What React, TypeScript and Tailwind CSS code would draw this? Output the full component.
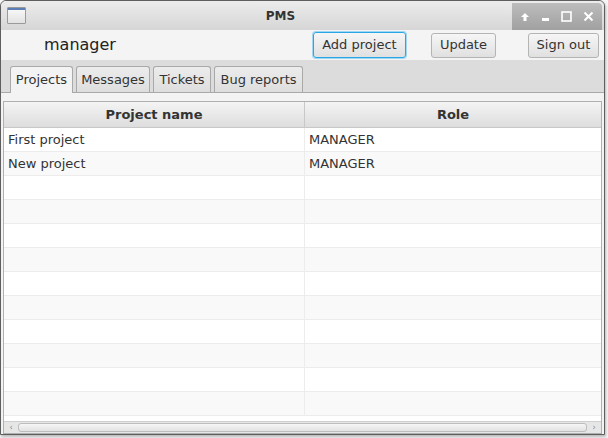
import React from 'react';

const font = { fontFamily: '"DejaVu Sans", "Liberation Sans", sans-serif' };

const rows = [
  { name: 'First project', role: 'MANAGER' },
  { name: 'New project', role: 'MANAGER' },
];

function TitleBar() {
  return (
    <div className="h-[29px] flex items-stretch bg-gradient-to-b from-[#ececec] to-[#d6d6d6] rounded-t-[5px]">
      <div className="w-[30px] flex items-center pl-[6px]">
        {/* window icon */}
        <div className="w-[19px] h-[17px] border border-[#9a9a9a] bg-gradient-to-b from-[#fafafa] to-[#e2e2e2] rounded-[1px] overflow-hidden">
          <div className="h-[2px] bg-[#5b7fb5]" />
        </div>
      </div>
      <div className="flex-1 flex items-center justify-center pl-[18px] text-[12px] font-bold text-[#333]">PMS</div>
      <div className="w-[90px] mt-[2px] mr-[2px] bg-gradient-to-b from-[#bdbdbd] to-[#a0a0a0] rounded-tr-[4px] flex items-center justify-around px-[3px]">
        <svg width="10" height="10" viewBox="0 0 10 10">
          <path d="M5 1 L9 5 H6.5 V9 H3.5 V5 H1 Z" fill="#fff" />
        </svg>
        <svg width="10" height="10" viewBox="0 0 10 10">
          <rect x="1" y="6" width="7" height="3" fill="#fff" />
        </svg>
        <svg width="11" height="11" viewBox="0 0 11 11">
          <rect x="1" y="1" width="9" height="9" fill="none" stroke="#fff" strokeWidth="1.6" />
        </svg>
        <svg width="11" height="11" viewBox="0 0 11 11">
          <path d="M1.5 1.5 L9.5 9.5 M9.5 1.5 L1.5 9.5" stroke="#fff" strokeWidth="2" />
        </svg>
      </div>
    </div>
  );
}

function Btn({ label, focused, className }: { label: string; focused?: boolean; className: string }) {
  return (
    <div
      className={
        'h-[25px] flex items-center justify-center text-[13px] text-[#333] rounded-[3px] bg-gradient-to-b from-[#f6f6f6] to-[#e0e0e0] ' +
        (focused ? 'border border-[#2aa6e6] shadow-[0_0_0_1px_#9fd6f2] ' : 'border border-[#b4b4b4] ') +
        className
      }
    >
      {label}
    </div>
  );
}

function Tab({ label, active, w }: { label: string; active?: boolean; w: string }) {
  return (
    <div
      className={
        'h-[26px] flex items-center justify-center text-[13px] text-[#333] border border-b-0 border-[#a9a9a9] rounded-t-[3px] ' +
        (active ? 'bg-[#f3f3f3] h-[27px] -mb-px ' : 'bg-gradient-to-b from-[#ececec] to-[#dedede] ') +
        w
      }
    >
      {label}
    </div>
  );
}

export default function App() {
  const empty = Array.from({ length: 10 });
  return (
    <div className="w-[608px] h-[438px] bg-[#f6f6f6] overflow-hidden" style={font}>
      <div className="w-[605px] h-[435px] border border-[#5e5e5e] rounded-t-[6px] bg-[#f3f3f3] flex flex-col overflow-hidden shadow-[1px_2px_3px_rgba(0,0,0,0.25)]">
        <TitleBar />

        {/* toolbar */}
        <div className="h-[30px] flex items-center bg-[#f4f4f4]">
          <span className="ml-[43px] text-[16px] text-[#222]">manager</span>
          <Btn label="Add project" focused className="ml-[197px] w-[93px] h-[26px]" />
          <Btn label="Update" className="ml-[25px] w-[65px]" />
          <Btn label="Sign out" className="ml-[32px] w-[71px]" />
        </div>

        {/* tabs */}
        <div className="h-[33px] bg-[#dcdcdc] flex items-end gap-[3px] pl-[9px] border-b border-[#a9a9a9]">
          <Tab label="Projects" active w="w-[63px]" />
          <Tab label="Messages" w="w-[74px]" />
          <Tab label="Tickets" w="w-[58px]" />
          <Tab label="Bug reports" w="w-[89px]" />
        </div>

        {/* table */}
        <div className="flex-1 bg-[#f3f3f3] pt-[8px] px-[2px] flex flex-col min-h-0">
          <div className="flex-1 border border-[#b0b0b0] bg-white flex flex-col min-h-0">
            <div className="h-[26px] flex bg-gradient-to-b from-[#f4f4f4] to-[#dddddd] border-b border-[#c8c8c8] text-[13px] font-bold text-[#333]">
              <div className="w-[301px] flex items-center justify-center border-r border-[#c8c8c8]">Project name</div>
              <div className="flex-1 flex items-center justify-center">Role</div>
            </div>
            <div className="flex-1 overflow-hidden">
              {rows.map((r, i) => (
                <div key={i} className={'h-[24px] flex text-[13px] text-[#333] border-b border-[#ececec] ' + (i % 2 ? 'bg-[#f9f9f9]' : 'bg-white')}>
                  <div className="w-[301px] pl-[4px] flex items-center border-r border-[#ececec]">{r.name}</div>
                  <div className="flex-1 pl-[4px] flex items-center">{r.role}</div>
                </div>
              ))}
              {empty.map((_, i) => (
                <div key={'e' + i} className={'h-[24px] flex border-b border-[#ececec] ' + (i % 2 ? 'bg-[#f9f9f9]' : 'bg-white')}>
                  <div className="w-[301px] border-r border-[#ececec]" />
                  <div className="flex-1" />
                </div>
              ))}
            </div>
            {/* horizontal scrollbar */}
            <div className="h-[12px] flex items-stretch bg-[#e6e6e6] border-t border-[#cfcfcf]">
              <div className="w-[14px] flex items-center justify-center text-[8px] text-[#888]">‹</div>
              <div className="flex-1 my-[1px] rounded-[3px] border border-[#bdbdbd] bg-gradient-to-b from-[#f6f6f6] to-[#e2e2e2]" />
              <div className="w-[14px] flex items-center justify-center text-[8px] text-[#888]">›</div>
            </div>
          </div>
        </div>
      </div>
    </div>
  );
}
